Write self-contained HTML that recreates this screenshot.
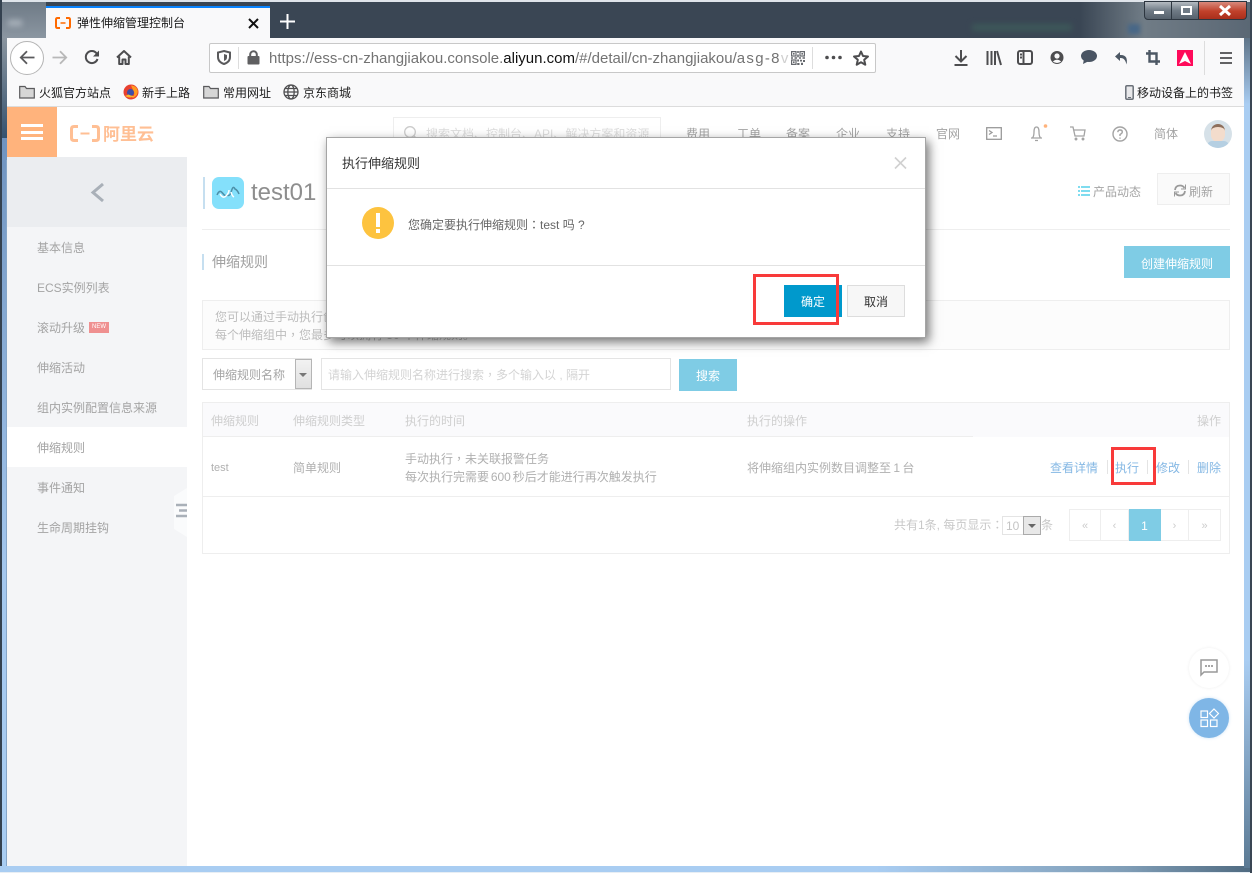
<!DOCTYPE html>
<html><head><meta charset="utf-8"><title>弹性伸缩管理控制台</title>
<style>
html,body{margin:0;padding:0;width:1252px;height:873px;overflow:hidden;background:#fff}
body{position:relative;font:12px/16px "Liberation Sans","Noto Sans CJK SC",sans-serif;color:#999}
.a{position:absolute;white-space:nowrap}
.b{position:absolute;box-sizing:border-box}
.t{font-family:"Noto Sans CJK TC",sans-serif}
svg{position:absolute;overflow:visible}
.tb{fill:none;stroke:#4d4d4f;stroke-width:2}
.bm{color:#1c1c1c;font-size:12px}
.nav{color:#a3a3a3;font-size:12px;top:126px}
.side{left:37px;color:#a4a4a4}
.th{top:413px;color:#cfcfcf}
.td{color:#b0b0b0}
.lnk{top:460px;color:#85b8e4}
.sep{position:absolute;top:460px;width:1px;height:14px;background:#e4e4e4}
.pg{position:absolute;top:509px;height:32px;box-sizing:border-box;border:1px solid #eee;border-left:0;text-align:center;line-height:32px;color:#ccc;font-size:11px}
.red{position:absolute;box-sizing:border-box;border:3px solid #f83a3a}
</style></head><body>

<!-- window frame -->
<div class="b" style="left:0;top:0;width:1252px;height:38px;background:#3a4654"></div>
<div class="b" style="left:1px;top:0;width:1250px;height:2px;background:#dfe4ea"></div>
<div class="b" style="left:0;top:0;width:2px;height:873px;background:#34414f"></div>
<div class="b" style="left:2px;top:2px;width:44px;height:36px;background:linear-gradient(180deg,#6e7a86,#8b96a1)"></div>
<div class="b" style="left:8px;top:20px;width:14px;height:6px;background:#aab3bc;filter:blur(3px)"></div>
<div class="b" style="left:2px;top:38px;width:5px;height:100px;background:linear-gradient(180deg,#8a959f,#35526f)"></div>
<div class="b" style="left:2px;top:138px;width:5px;height:729px;background:linear-gradient(180deg,#6f93bf,#a4c7ee 60%,#a9cdf2)"></div>
<div class="b" style="left:6px;top:160px;width:1px;height:706px;background:#86a6c8"></div>
<div class="b" style="left:0;top:866px;width:1252px;height:6px;background:linear-gradient(90deg,#a9cdf2 0,#a9cdf2 70%,#7f9db6 90%,#4f6a80)"></div>
<div class="b" style="left:0;top:872px;width:1252px;height:1px;background:#e8eef4"></div>
<div class="b" style="left:1244px;top:38px;width:8px;height:830px;background:linear-gradient(180deg,#5f7488,#a9cdf2 8%,#a9cdf2 75%,#5b7a94)"></div>
<div class="b" style="left:1250px;top:0;width:2px;height:873px;background:#3a4654"></div>
<div class="b" style="left:1080px;top:2px;width:64px;height:36px;background:linear-gradient(90deg,#3a4654,#707c86)"></div>
<div class="b" style="left:1144px;top:2px;width:106px;height:36px;background:linear-gradient(90deg,#707c86,#5a6774)"></div>
<div class="b" style="left:972px;top:24px;width:100px;height:7px;background:#3d5859;filter:blur(3px)"></div>
<div class="b" style="left:1128px;top:24px;width:12px;height:10px;background:#476787;filter:blur(2px)"></div>

<!-- window controls -->
<div class="b" style="left:1144px;top:1px;width:28px;height:19px;background:linear-gradient(180deg,#b5bbc1,#707b86 50%,#56616c);border:1px solid #2d3640;border-radius:0 0 0 4px"></div>
<div class="b" style="left:1172px;top:1px;width:27px;height:19px;background:linear-gradient(180deg,#b5bbc1,#707b86 50%,#56616c);border:1px solid #2d3640;border-left:0"></div>
<div class="b" style="left:1199px;top:1px;width:48px;height:19px;background:linear-gradient(180deg,#d8897c,#c0402a 55%,#a92f1c);border:1px solid #2d3640;border-left:0;border-radius:0 0 4px 0"></div>
<div class="b" style="left:1154px;top:11px;width:10px;height:3px;background:#fff"></div>
<div class="b" style="left:1181px;top:6px;width:11px;height:9px;border:2px solid #fff;background:#707b86"></div>
<svg style="left:1218px;top:5px" width="14" height="11"><path d="M2 1L12 10M12 1L2 10" stroke="#fff" stroke-width="3"/></svg>

<!-- tab -->
<div class="b" style="left:46px;top:6px;width:224px;height:32px;background:#f9f9fa;border-top:2px solid #0a84ff"></div>
<svg style="left:55px;top:17px" width="16" height="12"><path d="M5 1H2.500Q1 1 1 2.500V9.500Q1 11 2.500 11H5M11 1H13.500Q15 1 15 2.500V9.500Q15 11 13.500 11H11" fill="none" stroke="#ff6a00" stroke-width="2"/><path d="M5.500 6H10.500" stroke="#ff6a00" stroke-width="1.500"/></svg>
<div class="a" style="left:77px;top:15px;color:#1a1a1a;font-size:12px">弹性伸缩管理控制台</div>
<svg style="left:248px;top:18px" width="11" height="11"><path d="M1 1L10 10M10 1L1 10" stroke="#111" stroke-width="2"/></svg>
<svg style="left:280px;top:14px" width="15" height="15"><path d="M7.500 0V15M0 7.500H15" stroke="#fff" stroke-width="2"/></svg>

<!-- toolbar -->
<div class="b" style="left:7px;top:38px;width:1237px;height:69px;background:#f9f9fa;border-bottom:1px solid #dcdcdc"></div>
<div class="b" style="left:10px;top:41px;width:34px;height:34px;border-radius:50%;border:1px solid #b5b5b5;background:#fff"></div>
<svg style="left:19px;top:50px" width="16" height="16"><path d="M15.500 7.500H2M8 1.200L1.800 7.500L8 13.800" fill="none" stroke="#5a5a5c" stroke-width="1.800"/></svg>
<svg style="left:52px;top:50px" width="16" height="16"><path d="M.5 7.500H14M8 1.200L14.200 7.500L8 13.800" fill="none" stroke="#b8b8b8" stroke-width="1.800"/></svg>
<svg style="left:84px;top:50px" width="16" height="16"><path d="M13.500 9A6 6 0 1 1 12.500 3.300L14.500 5" class="tb"/><path d="M15 .5V6.500H9" fill="#4d4d4f"/></svg>
<svg style="left:116px;top:50px" width="16" height="16"><path d="M1 7.500L8 1L15 7.500M3.200 6.500V14H6.500V9.500H9.500V14H12.800V6.500" class="tb" stroke-linejoin="round"/></svg>
<div class="b" style="left:209px;top:43px;width:667px;height:30px;background:#fff;border:1px solid #c8c8c8;border-radius:2px"></div>
<svg style="left:217px;top:50px" width="14" height="15"><path d="M7 1L13 2.500V7Q13 12 7 14Q1 12 1 7V2.500Z" fill="none" stroke="#5a5a5c" stroke-width="2"/><path d="M7 4L10 5V7.500Q10 10 7 11Z" fill="#5a5a5c"/></svg>
<div class="b" style="left:238px;top:47px;width:1px;height:22px;background:#ddd"></div>
<svg style="left:247px;top:50px" width="13" height="15"><rect x="0.500" y="6" width="12" height="8.500" rx="1" fill="#5f5f61"/><path d="M3.200 6.500V4.500A3.300 3.300 0 0 1 9.800 4.500V6.500" fill="none" stroke="#5f5f61" stroke-width="2"/></svg>
<div class="a" style="left:269px;top:49px;width:521px;overflow:hidden;font-size:15px;line-height:19px;color:#737373">https://ess-cn-zhangjiakou.console.<span style="color:#111">aliyun.com</span>/#/detail/cn-zhangjiakou/<span style="letter-spacing:1.300px">asg-8</span><span style="color:#cfcfcf">v</span></div>
<svg style="left:791px;top:51px" width="14" height="14"><path d="M0 0H14V14H0Z" fill="#fff"/><path d="M.6.600H5V5H.6ZM9 .600H13.400V5H9ZM.6 9H5V13.400H.6Z" fill="none" stroke="#66696e" stroke-width="1.200"/><path d="M2 2H3.600V3.600H2ZM10.400 2H12V3.600H10.400ZM2 10.400H3.600V12H2ZM6.200 0H7.800V2H6.200ZM6.200 3.500H7.800V6.200H6.200ZM0 6.200H2V7.800H0ZM3.500 6.200H6V7.800H3.500ZM8 6.200H10V7.800H8ZM11.500 6.200H14V7.800H11.500ZM6.200 8.500H8V10.500H6.200ZM9 8.800H11V10.500H9ZM12 9H14V11H12ZM6.200 12H8.500V14H6.200ZM10 11.800H12V14H10Z" fill="#66696e"/></svg>
<div class="b" style="left:812px;top:47px;width:1px;height:22px;background:#ddd"></div>
<svg style="left:825px;top:55px" width="17" height="5"><circle cx="2" cy="2.500" r="1.800" fill="#4d4d4f"/><circle cx="8.500" cy="2.500" r="1.800" fill="#4d4d4f"/><circle cx="15" cy="2.500" r="1.800" fill="#4d4d4f"/></svg>
<svg style="left:853px;top:50px" width="16" height="16"><path d="M8 1.500L10 6L15 6.500L11.200 9.800L12.300 14.700L8 12.200L3.700 14.700L4.800 9.800L1 6.500L6 6Z" class="tb" stroke-linejoin="round"/></svg>

<svg style="left:954px;top:50px" width="14" height="16"><path d="M7 0V11M1.500 6L7 11.500L12.500 6M0.500 15H13.500" class="tb"/></svg>
<svg style="left:986px;top:50px" width="16" height="15"><path d="M1.500 1V15M5.500 1V15M9 1V15M11 1L15 15" class="tb"/></svg>
<svg style="left:1017px;top:50px" width="16" height="15"><rect x="1" y="1" width="14" height="13" rx="2" class="tb"/><path d="M6.500 1V14M3 4.500H5M3 7.500H5" class="tb" stroke-width="1.500"/></svg>
<svg style="left:1050px;top:50px" width="14" height="15"><circle cx="7" cy="7.500" r="6.500" fill="#4d4d4f"/><circle cx="7" cy="6" r="2.600" fill="#f9f9fa"/><path d="M2.800 11.500Q7 7.800 11.200 11.500Q7 14.500 2.800 11.500Z" fill="#f9f9fa"/></svg>
<svg style="left:1081px;top:50px" width="16" height="14"><ellipse cx="8" cy="6" rx="8" ry="6" fill="#4a5563"/><path d="M3 9L2 14L8 11Z" fill="#4a5563"/></svg>
<svg style="left:1114px;top:51px" width="14" height="14"><path d="M6 1L1 5.500L6 10V7Q11 6.500 12.500 13.500Q14.500 3.500 6 4Z" fill="#4d5864"/></svg>
<svg style="left:1146px;top:50px" width="14" height="15"><path d="M3.500 0V11.500H14M0 3.500H10.500V15" fill="none" stroke="#4d5864" stroke-width="2.400"/></svg>
<svg style="left:1177px;top:50px" width="16" height="16"><rect width="16" height="16" fill="#ff0a5a"/><path d="M8 2L14 14L8 11L2 14Z" fill="#fff"/></svg>
<div class="b" style="left:1204px;top:41px;width:1px;height:34px;background:#ddd"></div>
<svg style="left:1220px;top:52px" width="12" height="12"><path d="M0 1H12M0 6H12M0 11H12" stroke="#4d4d4f" stroke-width="1.800"/></svg>

<!-- bookmarks -->
<svg style="left:19px;top:85px" width="16" height="14"><path d="M.7 13V1.500H6L7.500 3.500H15.300V13Z" fill="#d6d6d6" stroke="#5a5a5c" stroke-width="1.200"/></svg>
<div class="a bm" style="left:39px;top:85px">火狐官方站点</div>
<svg style="left:123px;top:84px" width="16" height="16"><circle cx="8" cy="8" r="7.500" fill="#e8402f"/><path d="M8 1.500A6.500 6.500 0 0 1 14.800 8Q14 13 9 14Q13 10 10 6Z" fill="#ff9b1f"/><circle cx="7.500" cy="8.500" r="3.500" fill="#3d4fa8"/><path d="M2 12Q7 15 12 12Q9 12.500 5.500 10.500Z" fill="#ffb52b"/></svg>
<div class="a bm" style="left:142px;top:85px">新手上路</div>
<svg style="left:203px;top:85px" width="16" height="14"><path d="M.7 13V1.500H6L7.500 3.500H15.300V13Z" fill="#d6d6d6" stroke="#5a5a5c" stroke-width="1.200"/></svg>
<div class="a bm" style="left:223px;top:85px">常用网址</div>
<svg style="left:283px;top:84px" width="16" height="16" fill="none" stroke="#4d4d4f" stroke-width="1.300"><circle cx="8" cy="8" r="7"/><ellipse cx="8" cy="8" rx="3.200" ry="7"/><path d="M1 8H15M2 4.500H14M2 11.500H14"/></svg>
<div class="a bm" style="left:303px;top:85px">京东商城</div>
<svg style="left:1125px;top:85px" width="9" height="15"><rect x=".8" y=".8" width="7.400" height="13.400" rx="1.200" fill="#e8e8ea" stroke="#6a7078" stroke-width="1.500"/><path d="M3 12.500H6" stroke="#6a7078"/></svg>
<div class="a bm" style="left:1137px;top:85px">移动设备上的书签</div>

<!-- page header -->
<div class="b" style="left:7px;top:107px;width:1237px;height:50px;background:#fff"></div>
<div class="b" style="left:7px;top:107px;width:50px;height:50px;background:#ffb37c"></div>
<div class="b" style="left:21px;top:124px;width:22px;height:3px;background:#fff"></div>
<div class="b" style="left:21px;top:131px;width:22px;height:3px;background:#fff"></div>
<div class="b" style="left:21px;top:137px;width:22px;height:3px;background:#fff"></div>
<svg style="left:70px;top:125px" width="30" height="17"><path d="M8 1.500H4Q1.500 1.500 1.500 4V13Q1.500 15.500 4 15.500H8M22 1.500H26Q28.500 1.500 28.500 4V13Q28.500 15.500 26 15.500H22" fill="none" stroke="#ffbf94" stroke-width="3"/><path d="M10.500 8.500H19.500" stroke="#ffbf94" stroke-width="2"/></svg>
<div class="a" style="left:103px;top:125px;font-size:17px;line-height:20px;font-weight:bold;color:#ffbf94">阿里云</div>
<div class="b" style="left:393px;top:117px;width:268px;height:30px;border:1px solid #eee;background:#fff"></div>
<svg style="left:404px;top:126px" width="15" height="15" fill="none" stroke="#ccc" stroke-width="1.300"><circle cx="6" cy="6" r="5.300"/><path d="M10 10L14.500 14.500"/></svg>
<div class="a" style="left:426px;top:126px;color:#dcdcdc;font-size:12px">搜索文档、控制台、API、解决方案和资源</div>
<div class="a nav" style="left:686px">费用</div>
<div class="a nav" style="left:737px">工单</div>
<div class="a nav" style="left:786px">备案</div>
<div class="a nav" style="left:836px">企业</div>
<div class="a nav" style="left:886px">支持</div>
<div class="a nav" style="left:936px">官网</div>
<svg style="left:986px;top:127px" width="16" height="13" fill="none" stroke="#9a9a9a" stroke-width="1.300"><rect x=".7" y=".7" width="14.600" height="11.600"/><path d="M3 3.500L6 5.500L3 7.500M7 9H11"/></svg>
<svg style="left:1030px;top:124px" width="19" height="18" fill="none" stroke="#a3a3a3" stroke-width="1.300"><path d="M1 14H12M2.500 14Q4 12 4 8Q4 3 6.500 3Q9 3 9 8Q9 12 10.500 14M5 16.500H8"/><circle cx="15.500" cy="2" r="1.800" fill="#ffb37c" stroke="none"/></svg>
<svg style="left:1070px;top:126px" width="16" height="15" fill="none" stroke="#a3a3a3" stroke-width="1.300"><path d="M0 1H3L5 10H14L15 4H4"/><circle cx="6" cy="13" r=".8"/><circle cx="13" cy="13" r=".8"/></svg>
<svg style="left:1112px;top:126px" width="16" height="16" fill="none" stroke="#a3a3a3" stroke-width="1.400"><circle cx="8" cy="8" r="7"/><path d="M5.800 6.200Q6 4 8 4Q10.300 4 10.300 6Q10.300 7.200 8 8.500V10M8 11.500V12.800"/></svg>
<div class="a nav" style="left:1154px">简体</div>
<div class="b" style="left:1204px;top:120px;width:28px;height:28px;border-radius:50%;background:#d6e1e8;overflow:hidden">
<div class="b" style="left:7px;top:4px;width:14px;height:18px;border-radius:7px;background:#f3dccc;border-top:3px solid #8d6f5c"></div>
<div class="b" style="left:3px;top:21px;width:22px;height:10px;border-radius:5px;background:#b5cfe2"></div></div>

<!-- sidebar -->
<div class="b" style="left:7px;top:157px;width:180px;height:709px;background:#f4f5f7"></div>
<div class="b" style="left:7px;top:157px;width:180px;height:70px;background:#ebedf0"></div>
<svg style="left:90px;top:182px" width="15" height="21"><path d="M13 2L3 10.500L13 19" fill="none" stroke="#a9b0b8" stroke-width="3"/></svg>
<div class="b" style="left:7px;top:427px;width:180px;height:40px;background:#fff"></div>
<div class="a side" style="top:240px">基本信息</div>
<div class="a side" style="top:280px">ECS实例列表</div>
<div class="a side" style="top:320px">滚动升级</div>
<div class="b" style="left:89px;top:322px;width:20px;height:11px;background:#ef9090;color:#fff;font-size:6px;line-height:11px;text-align:center">NEW</div>
<div class="a side" style="top:360px">伸缩活动</div>
<div class="a side" style="top:400px">组内实例配置信息来源</div>
<div class="a side" style="top:440px">伸缩规则</div>
<div class="a side" style="top:480px">事件通知</div>
<div class="a side" style="top:520px">生命周期挂钩</div>
<svg style="left:174px;top:488px" width="13" height="49"><path d="M13 0L0 8V41L13 49Z" fill="#fafbfc"/><path d="M2 17H13M5 22.500H13M2 28H13" stroke="#a9b0b8" stroke-width="2.400"/></svg>

<!-- content -->
<div class="b" style="left:203px;top:177px;width:2px;height:32px;background:#c6dff0"></div>
<div class="b" style="left:212px;top:177px;width:32px;height:32px;border-radius:7px;background:#84e0fb"></div>
<svg style="left:216px;top:186px" width="24" height="14"><path d="M1 9Q3.500 3 6.500 7T11 9Q14 11 15.500 5T19 3Q21.500 4 23 8" fill="none" stroke="#4d8fa8" stroke-width="1.500"/><path d="M4 8Q7 13 10 10T13 4" fill="none" stroke="#fff" stroke-width="1.500"/><path d="M15 6Q16 10 18 11" fill="none" stroke="#fff" stroke-width="1.500"/></svg>
<div class="a" style="left:251px;top:178px;font-size:24px;line-height:30px;color:#8e8e8e">test01</div>
<svg style="left:1078px;top:186px" width="12" height="10"><path d="M0 1H2M3 1H12M0 5H2M3 5H12M0 9H2M3 9H12" stroke="#7fdcef" stroke-width="2"/></svg>
<div class="a" style="left:1093px;top:184px;color:#a5a5a5">产品动态</div>
<div class="b" style="left:1157px;top:173px;width:73px;height:32px;border:1px solid #eee;background:#fafafa"></div>
<svg style="left:1174px;top:184px" width="12" height="13" fill="none" stroke="#9a9a9a" stroke-width="1.800"><path d="M1 6Q1.500 1.500 6 1.500Q9 1.500 10.500 4M11 7Q10.500 11.500 6 11.500Q3 11.500 1.500 9"/><path d="M11.500 .5V5H7M.5 12.500V8H5" stroke-width="1"/></svg>
<div class="a" style="left:1189px;top:184px;color:#a5a5a5">刷新</div>
<div class="b" style="left:202px;top:229px;width:1028px;height:1px;background:#eee"></div>
<div class="b" style="left:202px;top:254px;width:2px;height:16px;background:#c6dff0"></div>
<div class="a" style="left:212px;top:254px;color:#a0a0a0;font-size:14px">伸缩规则</div>
<div class="b" style="left:1124px;top:246px;width:106px;height:32px;background:#7fcce5;color:#fff;text-align:center;line-height:37px">创建伸缩规则</div>

<div class="b" style="left:202px;top:300px;width:1028px;height:50px;border:1px solid #eee;background:#fcfcfc"></div>
<div class="a" style="left:215px;top:309px;color:#bdbdbd">您可以通过手动执行创建的伸缩规则</div>
<div class="a" style="left:215px;top:327px;color:#bdbdbd">每个伸缩组中<span class="t">，</span>您最多可以拥有 50 个伸缩规则。</div>

<div class="b" style="left:202px;top:358px;width:110px;height:32px;border:1px solid #e4e4e4;background:#fff"></div>
<div class="a" style="left:213px;top:367px;color:#a5a5a5">伸缩规则名称</div>
<div class="b" style="left:295px;top:359px;width:17px;height:30px;border:1px solid #b5b5b5;background:linear-gradient(180deg,#f2f2f2,#e0e0e0)"></div>
<div class="b" style="left:299px;top:373px;width:0;height:0;border:4px solid transparent;border-top:4px solid #777;border-bottom:0"></div>
<div class="b" style="left:321px;top:358px;width:350px;height:32px;border:1px solid #e4e4e4;background:#fff"></div>
<div class="a" style="left:328px;top:367px;color:#d4d4d4">请输入伸缩规则名称进行搜索<span class="t">，</span>多个输入以 , 隔开</div>
<div class="b" style="left:679px;top:359px;width:58px;height:32px;background:#7fcce5;color:#fff;text-align:center;line-height:34px">搜索</div>

<div class="b" style="left:202px;top:402px;width:1028px;height:152px;border:1px solid #eee;background:#fff"></div>
<div class="b" style="left:203px;top:403px;width:1026px;height:34px;background:#fafafc;border-bottom:1px solid #eee"></div>
<div class="b" style="left:973px;top:436px;width:256px;height:1px;background:#fafafc"></div>
<div class="a th" style="left:211px">伸缩规则</div>
<div class="a th" style="left:293px">伸缩规则类型</div>
<div class="a th" style="left:405px">执行的时间</div>
<div class="a th" style="left:747px">执行的操作</div>
<div class="a th" style="left:1197px">操作</div>
<div class="a td" style="left:211px;top:460px;font-size:11px">test</div>
<div class="a td" style="left:293px;top:460px">简单规则</div>
<div class="a td" style="left:405px;top:451px">手动执行<span class="t">，</span>未关联报警任务</div>
<div class="a td" style="left:405px;top:469px;word-spacing:-1.500px">每次执行完需要 600 秒后才能进行再次触发执行</div>
<div class="a td" style="left:747px;top:460px;word-spacing:-1px">将伸缩组内实例数目调整至 1 台</div>
<div class="a lnk" style="left:1050px">查看详情</div><div class="sep" style="left:1107px"></div>
<div class="a lnk" style="left:1115px">执行</div><div class="sep" style="left:1147px"></div>
<div class="a lnk" style="left:1156px">修改</div><div class="sep" style="left:1188px"></div>
<div class="a lnk" style="left:1197px">删除</div>
<div class="b" style="left:203px;top:496px;width:1026px;height:1px;background:#eee"></div>
<div class="a" style="left:894px;top:517px;color:#c8c8c8">共有1条, 每页显示<span class="t">：</span></div>
<div class="b" style="left:1002px;top:516px;width:39px;height:19px;border:1px solid #e4e4e4;background:#fff;color:#c4c4c4;line-height:18px;padding-left:3px">10</div>
<div class="b" style="left:1023px;top:516px;width:18px;height:19px;border:1px solid #aaa;background:#e8e8e8"></div>
<div class="b" style="left:1028px;top:524px;width:0;height:0;border:4px solid transparent;border-top:4px solid #666;border-bottom:0"></div>
<div class="a" style="left:1041px;top:517px;color:#c8c8c8">条</div>
<div class="pg" style="left:1069px;width:32px;border-left:1px solid #eee">«</div>
<div class="pg" style="left:1101px;width:28px">‹</div>
<div class="pg" style="left:1129px;width:32px;background:#7fcce5;border-color:#7fcce5;color:#fff;font-size:12px">1</div>
<div class="pg" style="left:1161px;width:28px">›</div>
<div class="pg" style="left:1189px;width:32px">»</div>
<div class="red" style="left:1111px;top:447px;width:45px;height:38px"></div>

<!-- floating buttons -->
<div class="b" style="left:1189px;top:648px;width:40px;height:40px;border-radius:50%;background:#fff;box-shadow:0 0 3px rgba(0,0,0,.07)"></div>
<svg style="left:1200px;top:659px" width="18" height="18"><path d="M1 1H17V13H4L1 16Z" fill="#fff" stroke="#999" stroke-width="1.500"/><path d="M5 7H7M8 7H10M11 7H13" stroke="#999" stroke-width="1.800"/></svg>
<div class="b" style="left:1189px;top:698px;width:40px;height:40px;border-radius:50%;background:#7fb6e6;box-shadow:0 0 3px rgba(127,182,230,.4)"></div>
<svg style="left:1200px;top:708px" width="20" height="20" fill="none" stroke="#fff" stroke-width="1.200"><rect x="1" y="3" width="6.500" height="6.500"/><rect x="1" y="12" width="6.500" height="6.500"/><rect x="10.500" y="12" width="6.500" height="6.500"/><path d="M14 1L18.500 5.500L14 10L9.500 5.500Z"/></svg>

<!-- modal -->
<div class="b" style="left:326px;top:137px;width:600px;height:201px;background:#fff;border:1px solid #a5a5a5;box-shadow:3px 4px 10px rgba(0,0,0,.55)"></div>
<div class="a" style="left:342px;top:156px;font-size:13px;color:#333">执行伸缩规则</div>
<svg style="left:894px;top:157px" width="13" height="12"><path d="M1 .5L12 11.500M12 .5L1 11.500" stroke="#d0d0d0" stroke-width="1.600"/></svg>
<div class="b" style="left:327px;top:188px;width:598px;height:1px;background:#e2e2e2"></div>
<div class="b" style="left:362px;top:207px;width:32px;height:32px;border-radius:50%;background:#fdc33f"></div>
<div class="b" style="left:376px;top:213px;width:4px;height:14px;background:#fff"></div>
<div class="b" style="left:376px;top:229px;width:4px;height:4px;background:#fff"></div>
<div class="a" style="left:408px;top:217px;color:#666">您确定要执行伸缩规则<span class="t">：</span>test 吗 ?</div>
<div class="b" style="left:327px;top:265px;width:598px;height:1px;background:#e2e2e2"></div>
<div class="b" style="left:784px;top:285px;width:58px;height:32px;background:#0099cc;color:#fff;text-align:center;line-height:34px">确定</div>
<div class="b" style="left:847px;top:285px;width:58px;height:32px;background:#f7f7f7;border:1px solid #ddd;color:#333;text-align:center;line-height:32px">取消</div>
<div class="red" style="left:753px;top:274px;width:86px;height:51px"></div>
</body></html>
